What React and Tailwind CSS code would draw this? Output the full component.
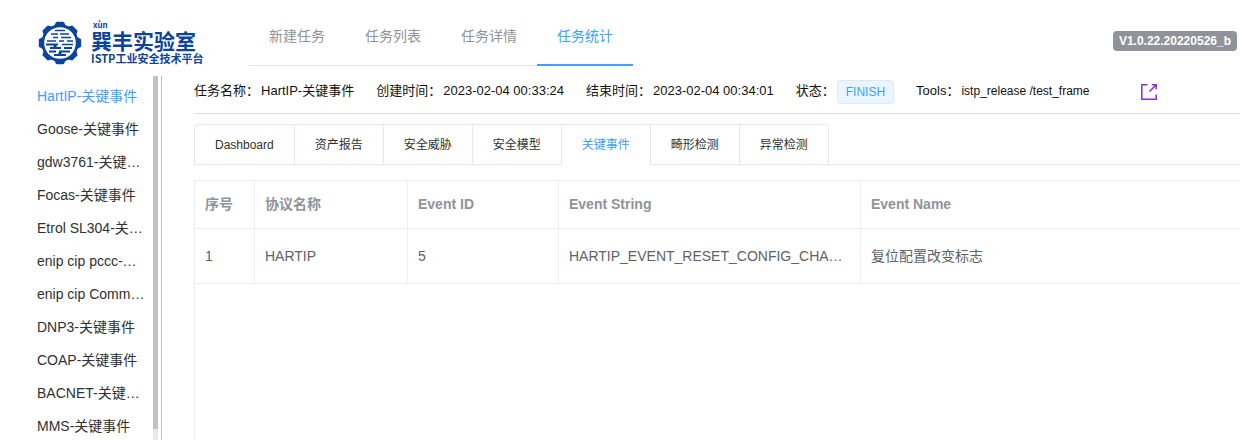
import { useState } from "react";

const NAV = ["新建任务", "任务列表", "任务详情", "任务统计"];

const TASKS = [
  "HartIP-关键事件",
  "Goose-关键事件",
  "gdw3761-关键事件",
  "Focas-关键事件",
  "Etrol SL304-关键事件",
  "enip cip pccc-关键事件",
  "enip cip Common-关键事件",
  "DNP3-关键事件",
  "COAP-关键事件",
  "BACNET-关键事件",
  "MMS-关键事件",
];

const TABS = ["Dashboard", "资产报告", "安全威胁", "安全模型", "关键事件", "畸形检测", "异常检测"];

const COLUMNS = ["序号", "协议名称", "Event ID", "Event String", "Event Name"];

const ROWS = [["1", "HARTIP", "5", "HARTIP_EVENT_RESET_CONFIG_CHANGED", "复位配置改变标志"]];

const TEETH = [0, 45, 90, 135, 180, 225, 270, 315];

function GearMark() {
  return (
    <svg viewBox="0 0 44 44" className="size-11 shrink-0" aria-hidden="true">
      <g fill="#0b449c">
        {TEETH.map((a) => (
          <path key={a} d="M15.5 6 L18 1.2 Q18.3 0.8 19 0.8 H25 Q25.7 0.8 26 1.2 L28.5 6 Z" transform={`rotate(${a} 22 22)`} />
        ))}
        <circle cx="22" cy="22" r="18.6" />
      </g>
      <circle cx="22" cy="22" r="15.8" fill="#fff" />
      <g stroke="#0b449c" fill="none">
        <path
          strokeWidth="1.4"
          d="M17 9.5h10M13 13h7M22 13h9M15 16.5h5M23 16.5h10M9 20h9M21 20h5M29 20h6M24 23.5h11"
        />
        <path strokeWidth="1.8" d="M8 23.5h12M12 27h11M26 27h8M21 30.5h11M11 30.5h7M16 34h12" />
        <path strokeWidth="3" d="M17 23v4M22 31v4" />
      </g>
    </svg>
  );
}

function ShareIcon() {
  return (
    <svg viewBox="0 0 18 18" className="size-[18px]" fill="none" stroke="#8a2be2" strokeWidth="1.5" aria-hidden="true">
      <path d="M7.5 1.8H1.8V16.2H16.2V11.5" />
      <path d="M9.5 8.5L15.7 2.3M11.8 1.8H16.2V6.2" />
    </svg>
  );
}

function Field({ label, children }) {
  return (
    <div className="flex items-center gap-[2px] whitespace-nowrap">
      <dt>{label}：</dt>
      <dd>{children}</dd>
    </div>
  );
}

export default function App() {
  const [nav, setNav] = useState(3);
  const [task, setTask] = useState(0);
  const [tab, setTab] = useState(4);

  return (
    <div className="flex h-screen flex-col overflow-hidden bg-white font-['Liberation_Sans','Noto_Sans_CJK_SC',sans-serif] text-sm text-[#303133]">
      <header className="flex shrink-0 items-start pb-2">
        <a href="#home" className="flex h-[66px] w-[249px] shrink-0 items-end pb-px pl-[38px] text-[#0b449c]">
          <GearMark />
          <span className="flex flex-col pl-[9px] font-['Noto_Sans_CJK_SC',sans-serif] font-bold whitespace-nowrap">
            <span className="pl-[2px] text-[8px] leading-[8px]">xùn</span>
            <span className="text-[21px] leading-[22px]">巽丰实验室</span>
            <span className="text-[11px] leading-[14px]">ISTP工业安全技术平台</span>
          </span>
        </a>
        <nav className="flex h-[66px]">
          {NAV.map((item, i) => (
            <a
              key={item}
              href="#nav"
              onClick={() => setNav(i)}
              className={
                i === nav
                  ? "border-b-2 border-[#409eff] px-5 pt-[6px] leading-[60px] text-[#409eff]"
                  : "border-b border-[#e6e6e6] px-5 pt-[6px] leading-[60px] text-[#909399]"
              }
            >
              {item}
            </a>
          ))}
        </nav>
        <span className="mt-[31px] mr-[3px] ml-auto rounded bg-[#909399] px-[6px] text-xs leading-5 font-bold text-white">
          V1.0.22.20220526_b
        </span>
      </header>

      <div className="flex min-h-0 flex-1 pt-[2px]">
        <aside className="flex w-[162px] shrink-0 border-r border-[#c0c0c0] pr-[3px]">
          <ul className="min-w-0 flex-1 overflow-hidden pt-1 pl-[37px]">
            {TASKS.map((name, i) => (
              <li key={name} className="h-[33px]">
                <button
                  type="button"
                  onClick={() => setTask(i)}
                  className={
                    i === task
                      ? "block w-[108px] truncate text-left leading-8 text-[#409eff]"
                      : "block w-[108px] truncate text-left leading-8"
                  }
                >
                  {name}
                </button>
              </li>
            ))}
          </ul>
          <div className="flex w-[5px] flex-col bg-[#e9e9e9]">
            <div className="h-[97%] bg-[#c1c1c1]" />
          </div>
        </aside>

        <main className="flex min-w-0 flex-1 flex-col pl-8">
          <dl className="flex h-[38px] shrink-0 items-center gap-[22px] border-b border-[#dcdfe6] pb-[6px] text-[13px] text-[#111]">
            <Field label="任务名称">HartIP-关键事件</Field>
            <Field label="创建时间">2023-02-04 00:33:24</Field>
            <Field label="结束时间">2023-02-04 00:34:01</Field>
            <Field label="状态">
              <span className="block rounded border border-[#d9ecff] bg-[#ecf5ff] px-2 text-xs leading-[22px] text-[#409eff]">
                FINISH
              </span>
            </Field>
            <Field label="Tools">
              <span className="text-xs">istp_release /test_frame</span>
            </Field>
            <button type="button" aria-label="打开" className="ml-7">
              <ShareIcon />
            </button>
          </dl>

          <div className="mt-[10px] flex h-[41px] shrink-0 text-xs">
            <div role="tablist" className="flex overflow-hidden rounded-t border-t border-l border-[#e4e7ed]">
              {TABS.map((item, i) => (
                <button
                  key={item}
                  type="button"
                  role="tab"
                  aria-selected={i === tab}
                  onClick={() => setTab(i)}
                  className={
                    i === tab
                      ? "border-r border-b border-r-[#e4e7ed] border-b-white px-5 text-[#409eff]"
                      : "border-r border-b border-[#e4e7ed] px-5"
                  }
                >
                  {item}
                </button>
              ))}
            </div>
            <div className="flex-1 border-b border-[#e4e7ed]" />
          </div>

          <div className="mt-[15px] min-h-0 flex-1 overflow-hidden border-t border-l border-[#ebeef5]">
            <table className="w-full table-fixed border-separate border-spacing-0">
              <colgroup>
                <col className="w-[60px]" />
                <col className="w-[153px]" />
                <col className="w-[151px]" />
                <col className="w-[302px]" />
                <col />
              </colgroup>
              <thead>
                <tr className="h-12 text-left text-[#909399]">
                  {COLUMNS.map((c) => (
                    <th key={c} className="border-r border-b border-[#ebeef5] px-[10px] pb-[2px] font-bold last:border-r-0">
                      {c}
                    </th>
                  ))}
                </tr>
              </thead>
              <tbody>
                {ROWS.map((row) => (
                  <tr key={row[0]} className="h-[55px] text-[#606266]">
                    {row.map((cell, i) => (
                      <td key={COLUMNS[i]} className="truncate border-r border-b border-[#ebeef5] px-[10px] last:border-r-0">
                        {cell}
                      </td>
                    ))}
                  </tr>
                ))}
              </tbody>
            </table>
          </div>
        </main>
      </div>
    </div>
  );
}
